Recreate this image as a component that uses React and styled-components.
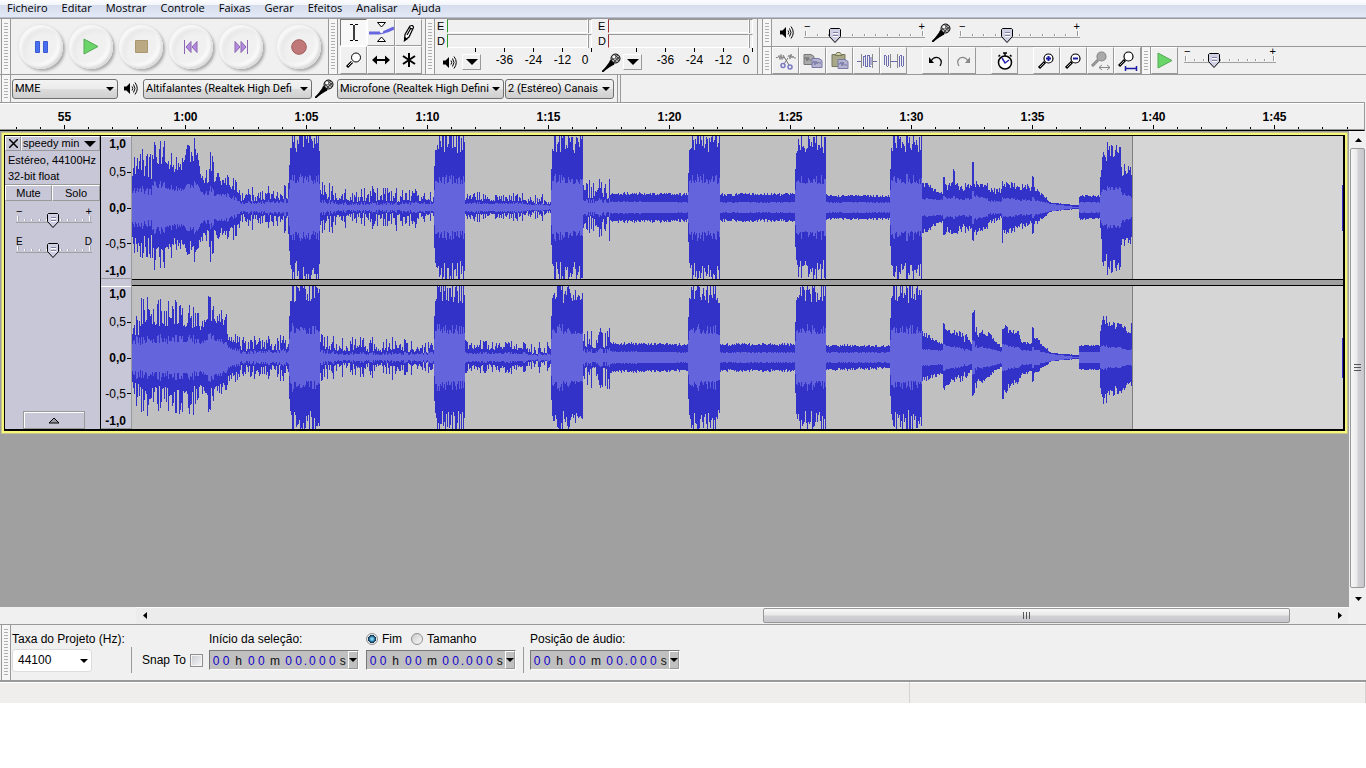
import React, { useState } from "react";
import styled, { createGlobalStyle, css } from "styled-components";

const ui = '"Open Sans", "Noto Sans", sans-serif';
const compact = 'Roboto, "Open Sans", sans-serif';
const sans = '"Liberation Sans", Arial, sans-serif';

const Global = createGlobalStyle`
  * { box-sizing: border-box; }
  body { margin: 0; background: #fff; font: 12px/16px ${sans}; color: #000; }
  button, input, select { font: inherit; color: inherit; margin: 0; padding: 0; border: 0; border-radius: 0; background: none; }
  svg { display: block; flex: none; }
`;

/* ---------- window ---------- */

const Window = styled.div`
  display: flex;
  flex-direction: column;
  min-height: calc(100vh - 65px);
  background: #f0f0f0;
`;

const MenuBar = styled.nav`
  display: flex;
  gap: 14px;
  height: 18px;
  padding: 0 7px 2px;
  border-bottom: 1px solid #b6bccc;
  background: linear-gradient(#fdfdfe 0, #f1f4fa 5px, #d5dcec 5px, #e2e8f5 16px);
`;

const MenuItem = styled.button`
  font: 11px/15px ${ui};
`;

const ToolRow = styled.div`
  display: flex;
  padding-left: 1px;
  border-top: 1px solid #999;
`;

const Grip = styled.div`
  flex: none;
  display: flex;
  justify-content: center;
  width: 10px;
  padding: 4px 0;
  border: solid #999;
  border-width: 0 1px;
  background: #f6f6f6;
  &::before {
    content: "";
    width: 4px;
    background: repeating-linear-gradient(#b0b0b0 0 1px, #f6f6f6 1px 3px);
  }
`;

const Bar = styled.div`
  display: flex;
  align-items: center;
`;

/* ---------- transport ---------- */

const Transport = styled(Bar)`
  gap: 6px;
  padding: 0 7px 0 8px;
  height: 55px;
`;

const RoundButton = styled.button`
  display: grid;
  place-items: center;
  width: 44px;
  height: 44px;
  margin-left: ${(p) => (p.$apart ? 8 : 0)}px;
  border-radius: 50%;
  background: #f0f0f0;
  box-shadow: 2px 2px 3px #a8a8a8, -1px -1px 3px #e8e8e8, inset 3px 3px 3px #f8f8f8,
    inset -2px -2px 3px #d8d8d8, inset -5px -5px 3px #fbfbfb, inset 6px 6px 4px #e7e7e7;
`;

/* ---------- square tool buttons ---------- */

const raised = css`
  border: 1px solid;
  border-color: #fff #999 #999 #fff;
`;

const ToolGrid = styled.div`
  display: grid;
  grid-template-columns: 27px 28px 27px;
  grid-template-rows: 27px 28px;
  padding: 0 3px 0 2px;
`;

const ToolButton = styled.button`
  display: grid;
  place-items: center;
  ${raised}
  border-color: ${(p) => (p.$down ? "#777 #fff #fff #777" : "#fff #999 #999 #fff")};
  background: ${(p) => (p.$down ? "#f8f8f8" : "#f0f0f0")};
`;

const EditButton = styled(ToolButton)`
  width: 27px;
  height: 27px;
`;

const Gap = styled.div`
  width: 15px;
`;

/* ---------- meters ---------- */

const Meters = styled.div`
  display: flex;
  border-right: 1px solid #999;
`;

const Meter = styled.div`
  width: 161px;
`;

const Channel = styled.div`
  display: grid;
  grid-template-columns: 12px 141px 4px;
  height: 14px;
  line-height: 14px;
  font-size: 11px;
  margin-bottom: ${(p) => (p.$first ? 1 : 0)}px;
`;

const ChannelName = styled.span`
  padding-left: 2px;
`;

const LevelBar = styled.div`
  border: solid;
  border-width: 1px 1px 1px 1px;
  border-color: #999 #fff #fff ${(p) => p.$mark};
`;

const ClipLamp = styled.div`
  border: solid;
  border-width: 1px 1px 0 1px;
  border-color: #999 #fff #fff #999;
`;

const ScaleTicks = styled.div`
  display: flex;
  padding-left: 12px;
  i {
    width: 29px;
    height: 4px;
    border-right: 1px solid #000;
  }
`;

const ScaleRow = styled.div`
  display: flex;
  align-items: center;
  height: 16px;
`;

const MeterIcon = styled.div`
  display: flex;
  justify-content: flex-end;
  width: 25px;
  padding-right: ${(p) => (p.$wide ? 0 : 3)}px;
  margin-top: 4px;
`;

const DropButton = styled.button`
  display: grid;
  place-items: center;
  width: 19px;
  height: 16px;
  margin: 4px 9px 0 2px;
  ${raised}
`;

const ScaleLabel = styled.span`
  width: 29px;
  text-align: center;
  font-size: 12px;
`;

const ScaleEnd = styled.span`
  width: 16px;
  text-align: center;
`;

/* ---------- right hand tool bars ---------- */

const RightColumn = styled.div`
  flex: 1;
  margin-left: 4px;
`;

const SubRow = styled.div`
  display: flex;
  height: ${(p) => p.$h}px;
  border-bottom: ${(p) => (p.$line ? 1 : 0)}px solid #999;
`;

const Mixer = styled(Bar)`
  padding-left: 8px;
`;

const SliderBox = styled.label`
  position: relative;
  display: block;
  width: ${(p) => p.$w}px;
  height: 22px;
  input {
    position: absolute;
    inset: 0;
    width: 100%;
    height: 100%;
    opacity: 0;
  }
  svg { overflow: visible; }
`;

const MixerSlot = styled.div`
  margin-left: ${(p) => p.$left}px;
`;

/* ---------- device bar ---------- */

const DeviceBar = styled(Bar)`
  height: 27px;
  padding-left: 1px;
`;

const SelectBox = styled.span`
  position: relative;
  display: block;
  width: ${(p) => p.$w}px;
  margin-left: ${(p) => p.$left || 0}px;
  select {
    display: block;
    width: 100%;
    height: 20px;
    padding: 0 14px 0 2px;
    border: 1px solid #707070;
    border-radius: 3px;
    background: linear-gradient(#f3f3f3, #ebebeb 50%, #dddddd 50%, #cfcfcf);
    font: 11px/16px ${compact};
    appearance: none;
    overflow: hidden;
  }
  svg {
    position: absolute;
    right: 4px;
    top: 8px;
    pointer-events: none;
  }
`;

const DeviceIcon = styled.div`
  display: grid;
  place-items: center;
  width: ${(p) => p.$w}px;
`;

const BarEnd = styled.div`
  width: 4px;
  height: 27px;
  margin-left: 3px;
  border: solid #999;
  border-width: 0 1px;
`;

/* ---------- time ruler ---------- */

const TimeRuler = styled.div`
  display: flex;
  height: 29px;
  padding-left: 4px;
  padding-bottom: 1px;
  margin-right: 1px;
  overflow: hidden;
  border: solid #999;
  border-width: 1px 1px 0 0;
  border-bottom: 1px solid #000;
  box-shadow: inset 0 1px #fff, inset 0 -1px #999;
`;

const RulerCell = styled.div`
  flex: 0 0 121px;
  display: flex;
  flex-direction: column;
  justify-content: space-between;
  padding-top: 6px;
  text-align: center;
  font-weight: bold;
`;

const RulerTicks = styled.div`
  display: flex;
  align-items: flex-end;
  height: 4px;
  i {
    flex: 1;
    display: flex;
    justify-content: center;
  }
  i::before {
    content: "";
    width: 1px;
    height: 2px;
    background: #000;
  }
  i:nth-child(3)::before { height: 4px; }
`;

/* ---------- tracks ---------- */

const Workspace = styled.div`
  flex: 1;
  display: flex;
  min-height: 320px;
`;

const TrackArea = styled.div`
  flex: 1;
  min-width: 0;
  padding: 4px;
  background: #a0a0a0;
`;

const Track = styled.section`
  display: flex;
  border: solid #000;
  border-width: 1px 2px 2px 1px;
  box-shadow: 0 0 0 2px #f6f67c, 0 0 0 3px #c4c48a;
  background: #c8c7d7;
`;

const TrackPanel = styled.div`
  flex: none;
  display: flex;
  flex-direction: column;
  width: 96px;
  border-right: 1px solid #000;
  font-size: 11px;
`;

const TitleRow = styled.div`
  display: grid;
  grid-template-columns: 16px 79px;
  height: 15px;
`;

const PanelButton = styled.button`
  display: flex;
  align-items: center;
  justify-content: ${(p) => (p.$spread ? "space-between" : "center")};
  padding: ${(p) => (p.$spread ? "0 3px 0 1px" : "0")};
  line-height: 13px;
  ${raised}
`;

const TrackInfo = styled.div`
  height: 33px;
  padding: 1px 0 0 3px;
  line-height: 16px;
`;

const ButtonPair = styled.div`
  display: grid;
  grid-template-columns: 47px 48px;
  height: 17px;
  border-top: 1px solid #999;
`;

const PanelSliders = styled.div`
  display: grid;
  gap: 8px;
  padding: 6px 0 0 11px;
`;

const Collapse = styled(PanelButton)`
  width: 62px;
  height: 18px;
  margin: auto 0 0 18px;
  border-color: #999;
  box-shadow: inset 1px 1px #fff;
`;

const ScaleColumn = styled.div`
  flex: none;
  display: flex;
  flex-direction: column;
  justify-content: space-between;
  width: 31px;
  border-right: 1px solid #999;
`;

const AmpScale = styled.div`
  display: grid;
  grid-template-rows: 16px 40px 32px 39px 16px;
  align-items: center;
  justify-items: end;
  height: 143px;
  box-shadow: inset 0 1px #fff, inset 0 -1px #999;
`;

const AmpLabel = styled.span`
  display: flex;
  align-items: center;
  font-weight: ${(p) => (p.$bold ? "bold" : "normal")};
  padding-right: ${(p) => (p.$tick ? 0 : 5)}px;
  &::after {
    content: "";
    display: ${(p) => (p.$tick ? "block" : "none")};
    width: 4px;
    height: 1px;
    margin-left: 1px;
    background: #000;
  }
`;

const Waves = styled.div`
  flex: 1;
  min-width: 0;
  display: grid;
  gap: 5px;
  background: #a0a0a0;
`;

const Lane = styled.div`
  display: flex;
  overflow: hidden;
  background: #d6d6d6;
  border: solid #000;
  border-width: ${(p) => (p.$first ? "0 0 1px" : "1px 0 0")};
`;

const Clip = styled.div`
  flex: none;
  background: #c0c0c0;
  border-right: 1px solid #808080;
`;

const NextClip = styled.div`
  width: 1px;
  height: ${(p) => p.$h}px;
  margin: auto 0 auto auto;
  background: #3232c8;
`;

/* ---------- scroll bars ---------- */

const VScroll = styled.div`
  display: flex;
  flex-direction: column;
  width: 17px;
  padding: 0 1px;
  background: #f0f0f0;
`;

const HScroll = styled.div`
  display: flex;
  height: 17px;
  margin: 0 18px 0 136px;
  background: #ececec;
  box-shadow: inset 0 1px #fafafa;
`;

const ArrowButton = styled.button`
  flex: none;
  display: grid;
  place-items: center;
  width: 17px;
  height: 17px;
`;

const VThumb = styled.div`
  flex: 1;
  display: grid;
  place-items: center;
  margin-bottom: 2px;
  border: 1px solid #979797;
  border-radius: 2px;
  background: linear-gradient(90deg, #f8f8f8, #e8e8ea 48%, #d2d2d6 52%, #c6c6cc);
`;

const HThumb = styled.div`
  flex: 527 1 0;
  display: grid;
  place-items: center;
  height: 15px;
  margin-top: 1px;
  border: 1px solid #979797;
  border-radius: 2px;
  background: linear-gradient(#f8f8f8, #e8e8ea 48%, #d2d2d6 52%, #c6c6cc);
`;

const HSpace = styled.div`
  flex: ${(p) => p.$grow} 1 0;
`;

/* ---------- selection bar ---------- */

const SelectionBar = styled.div`
  display: flex;
  padding-left: 1px;
  height: 56px;
  border-top: 1px solid #999;
`;

const Fields = styled.div`
  display: flex;
  padding: 5px 0 0 1px;
`;

const Field = styled.div`
  display: grid;
  grid-template-rows: 18px 24px;
  align-content: start;
  align-items: center;
  width: ${(p) => p.$w}px;
`;

const Divider = styled.div`
  width: 1px;
  height: 26px;
  margin: 17px ${(p) => p.$right}px 0 0;
  background: #999;
`;

const RateBox = styled(SelectBox)`
  select {
    height: 23px;
    padding-left: 5px;
    border-color: #dcdcdc;
    background: #fff;
    font: 12px/16px ${sans};
  }
  svg { top: 10px; }
`;

const Snap = styled.label`
  display: flex;
  align-items: center;
  align-self: flex-start;
  gap: 4px;
  width: 67px;
  height: 24px;
  margin-top: 18px;
`;

const CheckBox = styled.input`
  width: 13px;
  height: 13px;
  appearance: none;
  border: 1px solid #8e8f8f;
  background: linear-gradient(135deg, #c8ccd0, #f6f6f6);
  box-shadow: inset 0 0 0 1px #f4f4f4;
`;

const Radios = styled.div`
  display: flex;
  gap: 9px;
  label { display: flex; align-items: center; gap: 4px; }
`;

const Radio = styled.input`
  width: 12px;
  height: 12px;
  appearance: none;
  border: 1px solid #8e8f8f;
  border-radius: 50%;
  background: linear-gradient(135deg, #ccc, #f8f8f8);
  &:checked {
    background: radial-gradient(circle, #7fd0ee 0 1px, #1b5d88 3px, #123 4px, #eee 4px);
  }
`;

const TimeBox = styled.div`
  display: flex;
  width: 150px;
  height: 20px;
  padding-left: 1px;
  border: solid;
  border-width: 1px;
  border-color: #777 #fff #fff #777;
  background: #c0c0c0;
`;

const Digit = styled.input`
  width: 10px;
  height: 18px;
  padding-top: 1px;
  text-align: center;
  color: #1400c8;
`;

const Unit = styled.span`
  width: ${(p) => p.$w}px;
  padding-top: 3px;
  line-height: 15px;
  text-align: center;
  color: ${(p) => (p.$blue ? "#1400c8" : "#111")};
`;

const TimeDrop = styled.button`
  display: grid;
  place-items: center;
  flex: 1;
  ${raised}
`;

const StatusBar = styled.footer`
  display: flex;
  height: 23px;
  border-top: 2px solid #999;
  box-shadow: inset 0 1px #fff;
  background: #f0eded;
`;

const StatusPane = styled.div`
  flex: ${(p) => p.$grow} 1 0;
  border-right: 1px solid #d5d2d2;
`;

/* ---------- drawings ---------- */

const Caret = ({ w = 8, dir = "down" }) => {
  const h = Math.ceil(w / 2);
  if (dir === "down") return <svg width={w} height={h}><path d={`M0 0H${w}L${w / 2} ${h}z`} /></svg>;
  if (dir === "up") return <svg width={w} height={h}><path d={`M0 ${h}H${w}L${w / 2} 0z`} /></svg>;
  if (dir === "left") return <svg width={h} height={w}><path d={`M${h} 0V${w}L0 ${w / 2}z`} /></svg>;
  return <svg width={h} height={w}><path d={`M0 0V${w}L${h} ${w / 2}z`} /></svg>;
};

const Speaker = () => (
  <svg width="14" height="13" fill="none" stroke="#000">
    <path d="M0 4.500h2.500L6 1v11L2.500 8.500H0z" fill="#000" stroke="none" />
    <path d="M8 4.500q1.500 2 0 4M9.500 2.500q3 4 0 8M11 .5q4.500 6 0 12" />
  </svg>
);

const Mic = () => (
  <svg width="19" height="19">
    <path d="M0 19L8 8l4 3.500z" />
    <path d="M0 19L11 9" stroke="#000" strokeWidth="2" />
    <path d="M8 7.500l4 4" stroke="#000" strokeWidth="2" />
    <circle cx="13.500" cy="5.500" r="4.500" fill="#b0b0b0" stroke="#000" />
    <path d="M10 5l5 5M11 3l6 5M13 2l4 4M10 7l6-5M12 9l5-5" stroke="#333" strokeWidth=".8" />
    <circle cx="12" cy="4" r="1.200" fill="#fff" />
  </svg>
);

const Lens = ({ sign, fill = "#fff", ink = "#000", up = false, children }) => (
  <svg width="20" height="20" fill="none" stroke={ink}>
    <g transform={up ? "translate(-1 -2)" : "translate(0 0)"}>
      <path d="M2 17L8 11" strokeWidth="3" />
      <path d="M3 16L7 12" stroke="#aaa" />
      <circle cx="11.500" cy="7.500" r="4.500" fill={fill} strokeWidth="1.200" />
      {sign && <path d={sign} stroke="#1a1aa0" strokeWidth="2" />}
    </g>
    {children}
  </svg>
);

const icons = {
  pause: (
    <svg width="13" height="12" fill="#4a6ef0" stroke="#3c5bd0">
      <path d="M.5.5h4v11h-4zM8.500.5h4v11h-4z" />
    </svg>
  ),
  play: (
    <svg width="16" height="17"><path d="M1 1L15 8.500L1 16z" fill="#6ad66a" stroke="#55a855" /></svg>
  ),
  stop: (
    <svg width="13" height="13"><path d="M.5.5h12v12H.5z" fill="#baa983" stroke="#a89870" /></svg>
  ),
  start: (
    <svg width="14" height="14" fill="#b48ae0" stroke="#8a66b0">
      <path d="M.5 0v14M7 1.500L2 7l5 5.500zM13 1.500L8 7l5 5.500z" />
    </svg>
  ),
  end: (
    <svg width="14" height="14" fill="#b48ae0" stroke="#8a66b0">
      <path d="M13.500 0v14M7 1.500L12 7l-5 5.500zM1 1.500L6 7l-5 5.500z" />
    </svg>
  ),
  record: (
    <svg width="16" height="16"><circle cx="8" cy="8" r="7.300" fill="#c07878" stroke="#a05c5c" /></svg>
  ),
  cursor: (
    <svg width="10" height="17" fill="none" stroke="#000">
      <path d="M1 .5h3M6 .5h3M1 16.500h3M6 16.500h3" />
      <path d="M5 1v15" strokeWidth="1.500" />
    </svg>
  ),
  envelope: (
    <svg width="25" height="21" fill="none" stroke="#000">
      <path d="M0 11h10q4 0 8-2l7-3" stroke="#6666e0" strokeWidth="3" />
      <path d="M8.500.5h8l-4 4.500zM8.500 19.500h8l-4-4.500z" fill="#fff" />
      <circle cx="12.500" cy="9.500" r="1.200" fill="#fff" stroke="#fff" />
    </svg>
  ),
  pencil: (
    <svg width="12" height="18" fill="#fff" stroke="#000" strokeWidth="1.200">
      <path d="M1.500 16.500l.5-6L7 2q3-1.500 3.500 1.500L6 13z" />
      <path d="M1.500 16.500l.3-3 2 1.500zM6 3.500l4 2" fill="#000" />
      <path d="M4 11l4-7" />
    </svg>
  ),
  shift: (
    <svg width="18" height="10">
      <path d="M0 5l5-4.500v9zM18 5l-5-4.500v9z" /><path d="M3 5h12" stroke="#000" strokeWidth="2" />
    </svg>
  ),
  star: (
    <svg width="14" height="14" stroke="#000" strokeWidth="2"><path d="M7 0v14M1 3l12 8M13 3L1 11" /></svg>
  ),
  cut: (
    <svg width="20" height="18" fill="none" stroke="#888">
      <path d="M0 5.500h2l1-2 1 4 1-5 1 5 1-3 1 2M12 5l1-2 1 4 1-5 1 4 1-2 1 2h2" />
      <path d="M7 3l6 10M12 6l-4 6" stroke="#777" />
      <g stroke="#7a7ac0" strokeWidth="1.500"><circle cx="7" cy="13.500" r="2" /><circle cx="14" cy="15" r="2" /></g>
    </svg>
  ),
  copy: (
    <svg width="20" height="16" fill="none">
      <path d="M1 1.500h7l3 2v8H1z" fill="#aaa" stroke="#777" />
      <path d="M1 6h1l1-2 1 4 1-4 1 3h2" stroke="#777" />
      <path d="M9 5.500h7l3 2v7H9z" fill="#b4b4d0" stroke="#7a7aa8" />
      <path d="M9 10h1l1-2 1 4 1-4 1 3 1-2 1 1h2" stroke="#7a7aa8" />
    </svg>
  ),
  paste: (
    <svg width="18" height="18" fill="none">
      <path d="M1 2.500h13v12H1z" fill="#a8a888" stroke="#77775c" />
      <path d="M4 3.500l2-3h3l2 3z" fill="#d0d0a0" stroke="#77775c" />
      <path d="M7 7.500h7l3 2v7H7z" fill="#b4b4d0" stroke="#7a7aa8" />
      <path d="M7 12h2l1-2 1 4 1-4 1 3h3" stroke="#7a7aa8" />
    </svg>
  ),
  trim: (
    <svg width="20" height="16" fill="none" stroke="#6c6cb0">
      <path d="M0 8.500h4M16 8.500h4" />
      <path d="M4.500 1v14M15.500 1v14" stroke="#888" />
      <path d="M6.500 3v10M8.500 2v11M10.500 3v11M12.500 2v11M14 4v8" />
      <path d="M6 3.500h2M8 13.500h2M10 2.500h2M12 13.500h2" />
    </svg>
  ),
  silence: (
    <svg width="20" height="16" fill="none" stroke="#6c6cb0">
      <path d="M.5 2v10M2.500 3v10M4.500 2v11M15.500 3v11M17.500 2v11M19.500 3v10" />
      <path d="M1 2.500h1M3 13.500h1M16 2.500h1M18 13.500h1" />
      <path d="M7 8.500h6" />
      <path d="M6.500 1v14M13.500 1v14" stroke="#888" />
    </svg>
  ),
  undo: (
    <svg width="14" height="12" fill="none" stroke="#000" strokeWidth="1.200">
      <path d="M2 6q3-5 8-3 4 3 1 8" /><path d="M0 2v6h5z" fill="#000" stroke="none" />
    </svg>
  ),
  redo: (
    <svg width="14" height="12" fill="none" stroke="#888" strokeWidth="1.200">
      <path d="M12 6Q9 1 4 3q-4 3-1 8" /><path d="M14 2v6H9z" fill="#888" stroke="none" />
    </svg>
  ),
  timer: (
    <svg width="16" height="18" fill="none" stroke="#000">
      <circle cx="8" cy="10.500" r="6.500" fill="#fff" strokeWidth="1.500" />
      <path d="M6 1h4M8 1v3M13 3l1.500 1.500M3 3L1.500 4.500" strokeWidth="1.500" />
      <path d="M5 6l3 5 4-3" stroke="#2222b0" strokeWidth="1.500" />
    </svg>
  ),
};

const Magnifier = () => (
  <svg width="16" height="16" fill="none" stroke="#000">
    <path d="M1 15L6 10" strokeWidth="3" />
    <path d="M2 14L6 10" stroke="#ddd" />
    <circle cx="10" cy="5.500" r="4.500" fill="#fff" />
  </svg>
);

/* A tick scale with a movable pointer; `value` counts pixels along the scale. */
function Slider({ label, width, start, signs = ["−", "+"], ticks = 10, light }) {
  const [value, setValue] = useState(start);
  const step = (width - 4) / ticks;
  return (
    <SliderBox $w={width}>
      <input type="range" aria-label={label} min="0" max={width} value={value}
        onChange={(e) => setValue(Number(e.target.value))} />
      <svg width={width} height="22" shapeRendering="crispEdges">
        <path d={`M0 15.500H${width}`} stroke="#a0a0a0" />
        {Array.from({ length: ticks + 1 }, (_, i) => {
          const x = Math.round(1 + i * step);
          const tall = i === 0 || i === ticks;
          return (
            <g key={i}>
              <path d={`M${x}.5 ${tall ? 9 : 12}V14`} stroke={light ? "#fff" : "#999"} />
              <path d={`M${x + 1}.5 ${tall ? 9 : 12}V14`} stroke={light ? "#a8a8b4" : "#fff"} />
            </g>
          );
        })}
        <g shapeRendering="auto" fontFamily='"Liberation Sans"' fontSize={signs[0] === "E" ? 10 : 11}>
          <text x="0" y="8">{signs[0]}</text>
          <text x={width} y="8" textAnchor="end">{signs[1]}</text>
          <path d={`M${value - 4.5} 6.500h9l1 1v7l-5.500 6l-5.500-6v-7z`} fill="#cfd0e4" stroke="#000" />
          <path d={`M${value - 2} 10.500h5M${value - 2} 13.500h5`} stroke="#8080a0" />
          <path d={`M${value - 2} 11.500h5M${value - 2} 14.500h5`} stroke="#fff" />
        </g>
      </svg>
    </SliderBox>
  );
}

/* ---------- waveform data ----------
   [from, to, top0, top1, bottom0, bottom1, rms0, rms1, roughness] */

const bursts = [[157, 188], [302, 333], [419, 451], [556, 588], [663, 694], [758, 790]];

const left = [
  [0, 20, 62, 56, 54, 52, 23, 19, 0.5], [20, 34, 74, 72, 66, 64, 29, 27, 0.5],
  [34, 50, 68, 54, 62, 48, 26, 22, 0.5], [50, 68, 74, 72, 58, 58, 25, 29, 0.5],
  [68, 88, 56, 60, 54, 56, 24, 19, 0.6], [88, 108, 40, 24, 38, 28, 18, 8, 0.45],
  [108, 157, 20, 24, 20, 26, 6, 9, 0.7],
  [188, 206, 28, 20, 30, 22, 8, 6, 0.7], [206, 262, 20, 22, 20, 20, 5, 5, 0.75],
  [262, 302, 20, 16, 24, 14, 5, 6, 0.75], [333, 395, 16, 14, 14, 13, 5, 5, 0.6],
  [395, 419, 14, 14, 13, 13, 4, 4, 0.8],
  [451, 478, 30, 28, 28, 32, 9, 9, 0.7], [478, 556, 15, 14, 15, 14, 6, 5, 0.2],
  [588, 663, 14, 14, 14, 14, 5, 5, 0.2], [694, 758, 13, 12, 12, 12, 5, 5, 0.2],
  [790, 811, 28, 14, 28, 14, 9, 8, 0.25], [811, 813, 30, 30, 27, 27, 11, 11, 0],
  [813, 821, 24, 26, 26, 26, 10, 9, 0.3], [821, 823, 38, 34, 25, 25, 11, 11, 0],
  [823, 840, 24, 24, 28, 22, 9, 9, 0.35], [840, 842, 45, 44, 32, 34, 16, 15, 0],
  [842, 856, 26, 24, 28, 22, 12, 9, 0.25], [856, 870, 24, 18, 20, 10, 8, 6, 0.4],
  [870, 871, 26, 26, 35, 35, 10, 10, 0], [871, 900, 26, 22, 28, 17, 10, 7, 0.3],
  [900, 902, 31, 28, 26, 24, 10, 9, 0], [902, 917, 22, 7, 18, 6, 8, 4, 0.25],
  [917, 932, 5, 3, 4, 2, 3, 2, 0.1], [932, 947, 3, 2, 2, 1, 1, 0, 0.1],
  [947, 968, 12, 12, 12, 11, 5, 5, 0.15], [968, 970, 30, 44, 20, 42, 12, 17, 0],
  [970, 989, 66, 62, 70, 62, 21, 20, 0.3], [989, 1000, 44, 42, 42, 36, 16, 11, 0.3],
];

const right = [
  [0, 8, 44, 42, 46, 48, 22, 22, 0.5], [8, 34, 60, 60, 56, 54, 20, 24, 0.5],
  [34, 62, 60, 52, 56, 60, 22, 23, 0.5], [62, 76, 52, 52, 52, 48, 20, 22, 0.5],
  [76, 79, 64, 60, 56, 50, 24, 24, 0.1], [79, 95, 54, 44, 46, 32, 24, 15, 0.35],
  [95, 108, 24, 22, 26, 22, 12, 8, 0.4],
  [108, 157, 20, 24, 20, 24, 6, 9, 0.7],
  [188, 206, 26, 20, 26, 20, 8, 6, 0.7], [206, 262, 22, 20, 20, 20, 5, 5, 0.75],
  [262, 302, 20, 16, 22, 14, 5, 6, 0.75], [333, 395, 18, 15, 16, 15, 5, 5, 0.6],
  [395, 419, 15, 15, 14, 13, 4, 4, 0.8],
  [451, 478, 28, 30, 28, 34, 9, 9, 0.7], [478, 556, 15, 14, 15, 14, 6, 5, 0.2],
  [588, 663, 14, 14, 14, 14, 5, 5, 0.2], [694, 758, 13, 12, 13, 11, 5, 5, 0.2],
  [790, 811, 28, 14, 26, 17, 9, 7, 0.25], [811, 813, 34, 32, 30, 34, 13, 13, 0],
  [813, 828, 29, 26, 30, 20, 12, 10, 0.25], [828, 840, 26, 20, 24, 17, 9, 8, 0.4],
  [840, 843, 44, 48, 38, 34, 17, 15, 0], [843, 856, 30, 26, 30, 24, 12, 10, 0.3],
  [856, 870, 26, 10, 20, 9, 9, 6, 0.2], [870, 872, 28, 28, 41, 40, 13, 13, 0],
  [872, 888, 32, 26, 36, 24, 13, 10, 0.25], [888, 900, 18, 15, 20, 14, 8, 7, 0.25],
  [900, 902, 30, 28, 24, 22, 10, 10, 0], [902, 917, 22, 7, 17, 6, 8, 4, 0.2],
  [917, 932, 5, 3, 4, 2, 3, 2, 0.1], [932, 947, 3, 2, 2, 1, 1, 0, 0.1],
  [947, 968, 12, 12, 12, 12, 5, 5, 0.1], [968, 970, 26, 38, 30, 42, 10, 11, 0],
  [970, 989, 42, 38, 46, 38, 12, 11, 0.3], [989, 999, 34, 24, 36, 24, 9, 7, 0.15],
  [999, 1000, 34, 34, 28, 28, 8, 8, 0],
];

function columns(parts, seed) {
  let s = seed;
  const rnd = () => ((s = (s * 16807) % 2147483647) / 2147483647);
  const all = parts.concat(
    bursts.flatMap(([a, b]) => [
      [a, a + 1, 42, 42, 42, 42, 18, 18, 0.2], [a + 1, a + 3, 60, 64, 58, 70, 27, 29, 0.1],
      [a + 3, b, 78, 76, 76, 76, 34, 32, 0.3],
    ])
  );
  let peak = "";
  let rms = "";
  all.forEach(([from, to, t0, t1, b0, b1, r0, r1, rough]) => {
    for (let x = from; x < to; x += 1) {
      const k = (x - from) / (to - from);
      const burst = t0 > 75;
      const swing = Math.pow(rnd(), rough > 0.4 ? 1.4 : 1);
      const level = 1 - rough + rough * swing;
      const wobble = 1 + (rnd() - 0.5) * rough * 0.3;
      const top = Math.min(71, Math.round((t0 + (t1 - t0) * k) * level));
      const bottom = Math.min(71, Math.round((b0 + (b1 - b0) * k) * level * wobble));
      const r = Math.round((r0 + (r1 - r0) * k) * (burst ? 0.7 + 0.3 * swing * swing : 1 - rough * 0.8 * (1 - swing)));
      peak += `M${x} ${71 - top}h1V${72 + bottom}h-1z`;
      rms += `M${x} ${71 - Math.min(r, top)}h1V${72 + Math.min(r, bottom)}h-1z`;
    }
  });
  return { peak, rms };
}

const channels = [columns(left, 4127), columns(right, 9311)];

const Waveform = ({ data }) => (
  <svg width="1000" height="143" shapeRendering="crispEdges">
    <path d={data.peak} fill="#3232c8" />
    <path d={data.rms} fill="#6464dc" />
  </svg>
);

/* ---------- composed parts ---------- */

const Picker = ({ label, value, width, left: gap }) => (
  <SelectBox $w={width} $left={gap}>
    <select aria-label={label} defaultValue={value}><option>{value}</option></select>
    <Caret />
  </SelectBox>
);

const LevelMeter = ({ icon, wide, mark, name }) => (
  <Meter>
    {["E", "D"].map((c) => (
      <Channel key={c} $first={c === "E"}>
        <ChannelName>{c}</ChannelName>
        <LevelBar $mark={mark} />
        <ClipLamp />
      </Channel>
    ))}
    <ScaleTicks><i /><i /><i /><i /><i /></ScaleTicks>
    <ScaleRow>
      <MeterIcon $wide={wide}>{icon}</MeterIcon>
      <DropButton aria-label={name}><Caret w={12} /></DropButton>
      {["-36", "-24", "-12"].map((n) => <ScaleLabel key={n}>{n}</ScaleLabel>)}
      <ScaleEnd>0</ScaleEnd>
    </ScaleRow>
  </Meter>
);

const Vertical = () => (
  <AmpScale>
    <AmpLabel $bold>1,0</AmpLabel>
    <AmpLabel $tick>0,5</AmpLabel>
    <AmpLabel $bold $tick>0,0</AmpLabel>
    <AmpLabel $tick>-0,5</AmpLabel>
    <AmpLabel $bold>-1,0</AmpLabel>
  </AmpScale>
);

const mask = ["0", "0", ["h", 16], "0", "0", ["m", 18], "0", "0", [".", 4, true], "0", "0", "0", ["s", 11]];

const TimeField = ({ label }) => (
  <TimeBox role="group" aria-label={label}>
    {mask.map((m, i) =>
      typeof m === "string"
        ? <Digit key={i} aria-label={`${label} ${i + 1}`} maxLength={1} defaultValue={m} />
        : <Unit key={i} $w={m[1]} $blue={m[2]}>{m[0]}</Unit>
    )}
    <TimeDrop aria-label={`${label} formato`}><Caret /></TimeDrop>
  </TimeBox>
);

const menus = ["Ficheiro", "Editar", "Mostrar", "Controle", "Faixas", "Gerar", "Efeitos", "Analisar", "Ajuda"];
const times = ["55", "1:00", "1:05", "1:10", "1:15", "1:20", "1:25", "1:30", "1:35", "1:40", "1:45", ""];

export default function App() {
  return (
    <Window>
      <Global />
      <MenuBar>{menus.map((m) => <MenuItem key={m}>{m}</MenuItem>)}</MenuBar>

      <ToolRow>
        <Grip />
        <Transport>
          <RoundButton aria-label="Pausa">{icons.pause}</RoundButton>
          <RoundButton aria-label="Reproduzir">{icons.play}</RoundButton>
          <RoundButton aria-label="Parar">{icons.stop}</RoundButton>
          <RoundButton aria-label="Início">{icons.start}</RoundButton>
          <RoundButton aria-label="Fim">{icons.end}</RoundButton>
          <RoundButton aria-label="Gravar" $apart>{icons.record}</RoundButton>
        </Transport>
        <Grip />
        <ToolGrid>
          <ToolButton aria-label="Seleção" $down>{icons.cursor}</ToolButton>
          <ToolButton aria-label="Envelope">{icons.envelope}</ToolButton>
          <ToolButton aria-label="Desenho">{icons.pencil}</ToolButton>
          <ToolButton aria-label="Zoom"><Magnifier /></ToolButton>
          <ToolButton aria-label="Mover">{icons.shift}</ToolButton>
          <ToolButton aria-label="Multi">{icons.star}</ToolButton>
        </ToolGrid>
        <Grip />
        <Meters>
          <LevelMeter icon={<Speaker />} mark="#2c9a2c" name="Nível de saída" />
          <LevelMeter icon={<Mic />} wide mark="#a03030" name="Nível de entrada" />
        </Meters>
        <RightColumn>
          <SubRow $h={28} $line>
            <Grip />
            <Mixer>
              <Speaker />
              <MixerSlot $left={10}><Slider label="Volume de saída" width={121} start={31} /></MixerSlot>
              <MixerSlot $left={7}><Mic /></MixerSlot>
              <MixerSlot $left={8}><Slider label="Volume de entrada" width={121} start={48} /></MixerSlot>
            </Mixer>
          </SubRow>
          <SubRow $h={27}>
            <Grip />
            <EditButton aria-label="Cortar">{icons.cut}</EditButton>
            <EditButton aria-label="Copiar">{icons.copy}</EditButton>
            <EditButton aria-label="Colar">{icons.paste}</EditButton>
            <EditButton aria-label="Aparar">{icons.trim}</EditButton>
            <EditButton aria-label="Silenciar">{icons.silence}</EditButton>
            <Gap />
            <EditButton aria-label="Desfazer">{icons.undo}</EditButton>
            <EditButton aria-label="Refazer">{icons.redo}</EditButton>
            <Gap />
            <EditButton aria-label="Temporizador">{icons.timer}</EditButton>
            <Gap />
            <EditButton aria-label="Ampliar"><Lens sign="M9 7.500h5M11.500 5v5" /></EditButton>
            <EditButton aria-label="Reduzir"><Lens sign="M9 7.500h5" /></EditButton>
            <EditButton aria-label="Ajustar seleção">
              <Lens up fill="#aaa" ink="#888"><path d="M8 16.500h11M11 14l-3 2.500 3 2.500M16 14l3 2.500-3 2.500" /></Lens>
            </EditButton>
            <EditButton aria-label="Ajustar projeto">
              <Lens up><path d="M7 17.500h12M7.500 15v5M18.500 15v5" stroke="#1a1aa0" strokeWidth="1.500" /></Lens>
            </EditButton>
            <Grip />
            <EditButton aria-label="Reproduzir em velocidade">{icons.play}</EditButton>
            <MixerSlot $left={6}><Slider label="Velocidade" width={92} start={30} /></MixerSlot>
          </SubRow>
        </RightColumn>
      </ToolRow>

      <ToolRow>
        <Grip />
        <DeviceBar>
          <Picker label="Sistema de áudio" value="MME" width={106} />
          <DeviceIcon $w={25}><Speaker /></DeviceIcon>
          <Picker label="Saída" value="Altifalantes (Realtek High Defi" width={169} />
          <DeviceIcon $w={25}><Mic /></DeviceIcon>
          <Picker label="Entrada" value="Microfone (Realtek High Defini" width={167} />
          <Picker label="Canais" value="2 (Estéreo) Canais" width={109} left={1} />
          <BarEnd />
        </DeviceBar>
      </ToolRow>

      <TimeRuler>
        {times.map((t, i) => (
          <RulerCell key={i}>
            <span>{t}</span>
            <RulerTicks><i /><i /><i /><i /><i /></RulerTicks>
          </RulerCell>
        ))}
      </TimeRuler>

      <Workspace>
        <TrackArea>
          <Track>
            <TrackPanel>
              <TitleRow>
                <PanelButton aria-label="Fechar faixa">
                  <svg width="9" height="9"><path d="M0 0l9 9M9 0L0 9" stroke="#000" strokeWidth="1.500" /></svg>
                </PanelButton>
                <PanelButton $spread>speedy min<Caret w={12} /></PanelButton>
              </TitleRow>
              <TrackInfo>Estéreo, 44100Hz<br />32-bit float</TrackInfo>
              <ButtonPair>
                <PanelButton>Mute</PanelButton>
                <PanelButton>Solo</PanelButton>
              </ButtonPair>
              <PanelSliders>
                <Slider light label="Ganho" width={76} start={37} />
                <Slider light label="Balanço" width={76} start={37} signs={["E", "D"]} />
              </PanelSliders>
              <Collapse aria-label="Recolher faixa">
                <svg width="12" height="7"><path d="M1 6L6 1l5 5z" fill="#9a9aa8" stroke="#000" /></svg>
              </Collapse>
            </TrackPanel>
            <ScaleColumn><Vertical /><Vertical /></ScaleColumn>
            <Waves>
              {channels.map((data, i) => (
                <Lane key={i} $first={i === 0}>
                  <Clip><Waveform data={data} /></Clip>
                  <NextClip $h={i ? 40 : 46} />
                </Lane>
              ))}
            </Waves>
          </Track>
        </TrackArea>
        <VScroll>
          <ArrowButton aria-label="Para cima"><Caret w={7} dir="up" /></ArrowButton>
          <VThumb>
            <svg width="7" height="8"><path d="M0 .5h7M0 3.500h7M0 6.500h7" stroke="#555" /></svg>
          </VThumb>
          <ArrowButton aria-label="Para baixo"><Caret w={7} /></ArrowButton>
        </VScroll>
      </Workspace>

      <HScroll>
        <ArrowButton aria-label="Para a esquerda"><Caret w={7} dir="left" /></ArrowButton>
        <HSpace $grow={612} />
        <HThumb>
          <svg width="8" height="7"><path d="M.5 0v7M3.500 0v7M6.500 0v7" stroke="#555" /></svg>
        </HThumb>
        <HSpace $grow={41} />
        <ArrowButton aria-label="Para a direita"><Caret w={7} dir="right" /></ArrowButton>
      </HScroll>

      <SelectionBar>
        <Grip />
        <Fields>
          <Field $w={119}>
            <label htmlFor="rate">Taxa do Projeto (Hz):</label>
            <RateBox $w={80}>
              <select id="rate" defaultValue="44100"><option>44100</option></select>
              <Caret />
            </RateBox>
          </Field>
          <Divider $right={10} />
          <Snap>Snap To<CheckBox type="checkbox" /></Snap>
          <Field $w={157}>
            <span>Início da seleção:</span>
            <TimeField label="Início da seleção" />
          </Field>
          <Field $w={157}>
            <Radios>
              <label><Radio type="radio" name="range" defaultChecked />Fim</label>
              <label><Radio type="radio" name="range" />Tamanho</label>
            </Radios>
            <TimeField label="Fim da seleção" />
          </Field>
          <Divider $right={6} />
          <Field $w={150}>
            <span>Posição de áudio:</span>
            <TimeField label="Posição de áudio" />
          </Field>
        </Fields>
      </SelectionBar>

      <StatusBar>
        <StatusPane $grow={2} />
        <StatusPane $grow={1} />
      </StatusBar>
    </Window>
  );
}
